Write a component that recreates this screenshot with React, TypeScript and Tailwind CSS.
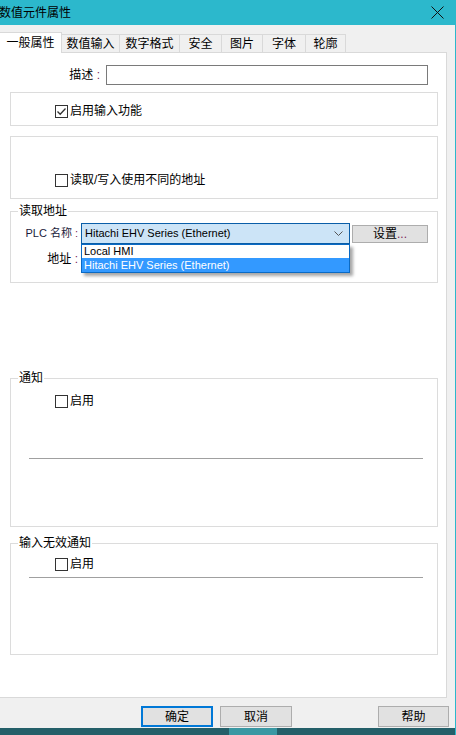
const cjk = "font-[family-name:'Liberation_Sans','Noto_Sans_CJK_SC',sans-serif]"

function Check({ checked, label }: { checked?: boolean; label: string }) {
    return (
        <div className="flex items-center gap-[2px] text-[12px] leading-[14px] text-black">
            <span className="flex h-[13px] w-[13px] items-center justify-center border border-[#333333] bg-white">
                {checked && (
                    <svg width="11" height="11" viewBox="0 0 11 11">
                        <path d="M1.5 5.5 L4.2 8.3 L9.5 2.5" fill="none" stroke="#333" strokeWidth="1.3" />
                    </svg>
                )}
            </span>
            <span>{label}</span>
        </div>
    )
}

function Group({ title, className, children }: { title?: string; className: string; children?: React.ReactNode }) {
    return (
        <div className={`relative ml-[10px] w-[428px] border border-[#dcdcdc] ${className}`}>
            {title && (
                <span className="absolute -top-[8px] left-[7px] bg-white px-[1px] text-[12px] leading-[14px] text-black">
                    {title}
                </span>
            )}
            {children}
        </div>
    )
}

const tabs = [
    { label: "数值输入", w: "w-[58px]" },
    { label: "数字格式", w: "w-[60px]" },
    { label: "安全", w: "w-[42px]" },
    { label: "图片", w: "w-[41px]" },
    { label: "字体", w: "w-[43px]" },
    { label: "轮廓", w: "w-[40px]" },
]

export default function App() {
    return (
        <div className={`flex h-[735px] w-[456px] flex-col overflow-hidden border-r border-[#2bb8cc] bg-[#f0f0f0] ${cjk}`}>
            <div className="flex h-[25px] shrink-0 items-center justify-between bg-[#2cb8cc] pr-[11px]">
                <span className="-ml-[1px] text-[12px] text-black">数值元件属性</span>
                <svg width="13" height="13" viewBox="0 0 13 13">
                    <path d="M0.5 0.5 L12.5 12.5 M12.5 0.5 L0.5 12.5" stroke="#111" strokeWidth="1" />
                </svg>
            </div>

            <div className="flex h-[27px] shrink-0 items-end">
                <div className="relative z-10 -mb-px flex h-[21px] w-[62px] items-center justify-center border-t border-r border-[#d9d9d9] bg-white pb-[1px] text-[12px] text-black">
                    一般属性
                </div>
                {tabs.map((t) => (
                    <div
                        key={t.label}
                        className={`flex h-[18px] ${t.w} items-center justify-center border-t border-r border-[#d9d9d9] text-[12px] text-black`}
                    >
                        {t.label}
                    </div>
                ))}
            </div>

            <div className="flex h-[646px] w-[447px] shrink-0 flex-col border-t border-r border-b border-[#d9d9d9] bg-white">
                <div className="mt-[12px] flex items-center">
                    <span className="w-[100px] text-right text-[12px] text-black">
                        描述 <span className="text-[#7a1f5c]">:</span>
                    </span>
                    <div className="ml-[6px] h-[20px] w-[322px] border border-[#7a7a7a]" />
                </div>

                <Group className="mt-[7px] h-[34px] pt-[11px] pl-[44px]">
                    <Check checked label="启用输入功能" />
                </Group>

                <Group className="mt-[10px] h-[63px] pt-[36px] pl-[44px]">
                    <Check label="读取/写入使用不同的地址" />
                </Group>

                <Group title="读取地址" className="mt-[12px] h-[72px] pt-[11px]">
                    <div className="flex items-center">
                        <span className="w-[67px] text-right text-[11px] text-[#1a1a3a]">
                            PLC 名称 <span className="text-[#7a1f5c]">:</span>
                        </span>
                        <div className="relative ml-[3px] flex h-[21px] w-[269px] items-center justify-between border border-[#0a5ea8] bg-[#cce4f7] pr-[6px] pl-[3px] text-[11px] text-black">
                            <span>Hitachi EHV Series (Ethernet)</span>
                            <svg width="9" height="6" viewBox="0 0 9 6">
                                <path d="M0.5 0.5 L4.5 4.5 L8.5 0.5" fill="none" stroke="#555" strokeWidth="1" />
                            </svg>
                            <div className="absolute top-[20px] -left-px z-20 flex w-[269px] flex-col border border-[#0a6ac4] bg-white text-[11px] shadow-[3px_3px_3px_rgba(0,0,0,0.35)]">
                                <div className="flex h-[13px] items-center pl-[2px] text-black">Local HMI</div>
                                <div className="flex h-[14px] items-center bg-[#3399ff] pl-[2px] text-white">
                                    Hitachi EHV Series (Ethernet)
                                </div>
                            </div>
                        </div>
                        <div className="ml-[2px] flex h-[18px] w-[76px] items-center justify-center border border-[#adadad] bg-[#e1e1e1] text-[12px] text-black">
                            设置<span className="text-[#7a1f5c]">...</span>
                        </div>
                    </div>
                    <div className="mt-[6px] flex items-center">
                        <span className="w-[67px] text-right text-[12px] text-black">
                            地址 <span className="text-[#7a1f5c]">:</span>
                        </span>
                    </div>
                </Group>

                <Group title="通知" className="mt-[95px] h-[149px] pt-[15px]">
                    <div className="pl-[44px]">
                        <Check label="启用" />
                    </div>
                    <div className="mt-[50px] ml-[18px] h-px w-[394px] bg-[#a0a0a0]" />
                </Group>

                <Group title="输入无效通知" className="mt-[16px] h-[112px] pt-[13px]">
                    <div className="pl-[44px]">
                        <Check label="启用" />
                    </div>
                    <div className="mt-[6px] ml-[18px] h-px w-[394px] bg-[#a0a0a0]" />
                </Group>
            </div>

            <div className="mt-[8px] flex h-[21px] shrink-0 text-[12px] text-black">
                <div className="ml-[141px] flex w-[72px] items-center justify-center border-2 border-[#0078d7] bg-[#e1e1e1]">确定</div>
                <div className="ml-[7px] flex w-[72px] items-center justify-center border border-[#adadad] bg-[#e1e1e1]">取消</div>
                <div className="ml-[86px] flex w-[71px] items-center justify-center border border-[#adadad] bg-[#e1e1e1]">帮助</div>
            </div>

            <div className="mt-[1px] flex h-[7px] shrink-0 bg-[#245f69]">
                <div className="ml-[229px] w-[48px] bg-[#3a98a3]" />
            </div>
        </div>
    )
}
